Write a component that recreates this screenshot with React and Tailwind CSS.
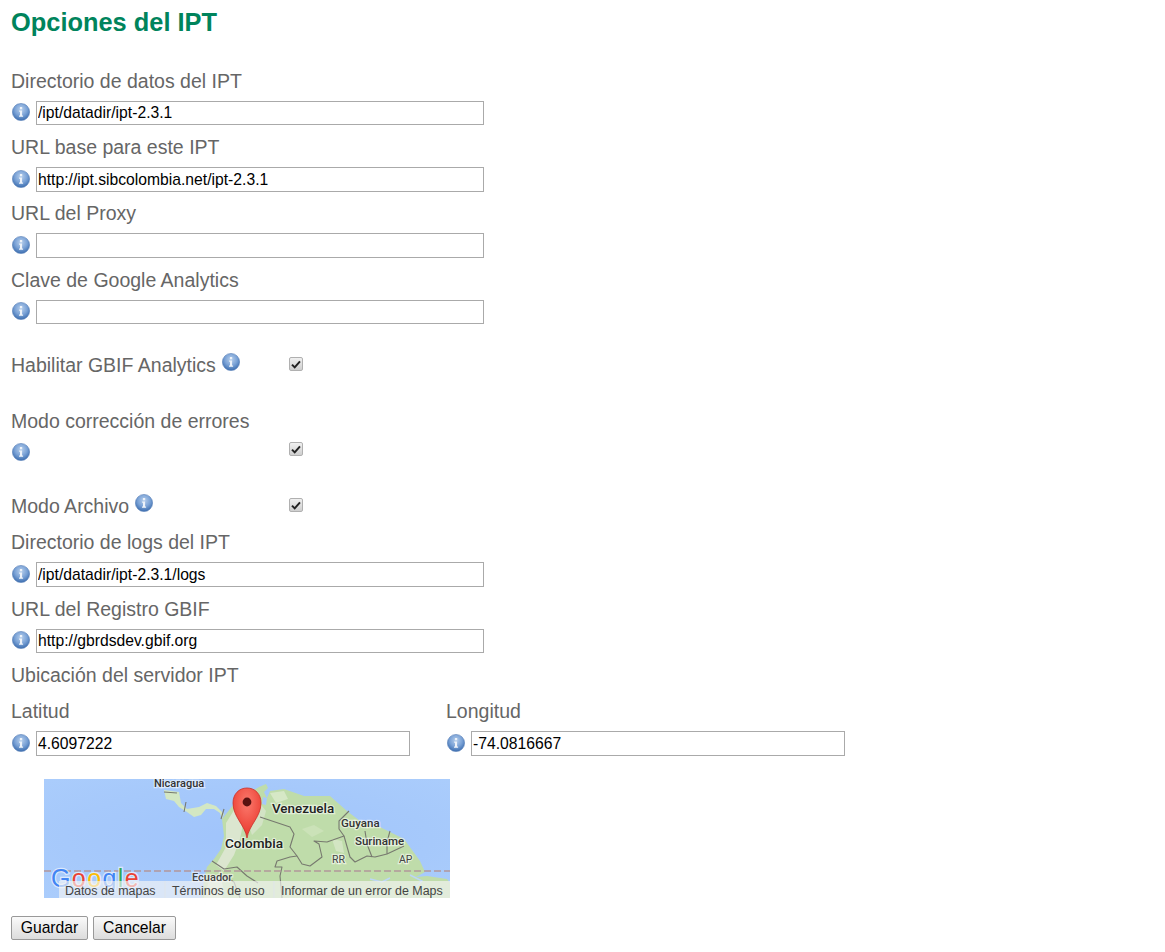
import React from "react";

function Info({ id = "a" }) {
  return (
    <svg width="18" height="18" viewBox="0 0 18 18" className="block shrink-0">
      <defs>
        <radialGradient id={"g" + id} cx="50%" cy="35%" r="65%">
          <stop offset="0%" stopColor="#b7cfec" />
          <stop offset="55%" stopColor="#7aa2d6" />
          <stop offset="100%" stopColor="#3a6cae" />
        </radialGradient>
      </defs>
      <circle cx="9" cy="9" r="8.6" fill={"url(#g" + id + ")"} stroke="#5a82b9" strokeWidth="0.6" />
      <rect x="7.9" y="4" width="2.3" height="2.2" fill="#eef3f9" />
      <path d="M7.1 7.5h3v5h1v1.3H7v-1.3h1v-3.7h-.9z" fill="#eef3f9" />
    </svg>
  );
}

function Check() {
  return (
    <div className="w-[14px] h-[14px] rounded-[2px] border border-[#b0b0b0] bg-gradient-to-b from-[#f0f0f0] to-[#cfcfcf] flex items-center justify-center shrink-0">
      <svg width="10" height="9" viewBox="0 0 10 9">
        <path d="M1 4.6 L3.7 7.4 L9 1.4" fill="none" stroke="#222" strokeWidth="2" />
      </svg>
    </div>
  );
}

function Label({ children }) {
  return <div className="text-[19.5px] leading-[24px] h-[24px] text-[#666666] whitespace-nowrap">{children}</div>;
}

function TextInput({ value, width = "w-[448px]", tall = false, id }) {
  return (
    <div className="flex items-start gap-[6px] h-[24px]">
      <div className={tall ? "ml-[1px] mt-[3px]" : "ml-[1px] mt-[2px]"}><Info id={id} /></div>
      <input
        readOnly
        value={value}
        className={"border border-[#aaaaaa] bg-white text-black text-[15.7px] px-[1px] outline-none " + (tall ? "h-[25px] " : "h-[24px] ") + width}
        style={{ fontFamily: "'Liberation Sans', Arial, sans-serif" }}
      />
    </div>
  );
}

function Field({ label, value, id, tall, rowClass = "h-[66px]" }) {
  return (
    <div className={rowClass}>
      <Label>{label}</Label>
      <div className="pt-[8px]">
        <TextInput value={value} id={id} tall={tall} />
      </div>
    </div>
  );
}

const halo = { paintOrder: "stroke", stroke: "#ffffff", strokeOpacity: 0.55, strokeWidth: 2.4 };

function MapPic() {
  const border = "#77796f";
  return (
    <svg width="406" height="119" viewBox="0 0 406 119" className="block" style={{ fontFamily: "Roboto, 'Liberation Sans', sans-serif" }}>
      <defs>
        <radialGradient id="sea" cx="50%" cy="50%" r="75%">
          <stop offset="0" stopColor="#a0c4fb" />
          <stop offset="0.6" stopColor="#a6c9fb" />
          <stop offset="1" stopColor="#abcdfc" />
        </radialGradient>
        <radialGradient id="pin" cx="50%" cy="30%" r="70%">
          <stop offset="0" stopColor="#fb7a6d" />
          <stop offset="1" stopColor="#e9352a" />
        </radialGradient>
      </defs>
      <rect width="406" height="119" fill="url(#sea)" />

      <path d="M120 11 L135 13 L137 24 L143 30 L155 28 L163 24 L172 27 L180 35 L178 40 L176 34 L170 30 L162 30 L157 36 L150 38 L143 33 L135 28 L130 22 L122 20 Z" fill="#d3e7c3" />
      <path d="M178 40 L190 25 L205 14 L215 8 L222 5 L224 9 L220 13 L223 19 L226 12 L240 10 L260 17 L286 17 L303 32 L316 42 L336 48 L360 60 L376 82 L381 93 L372 98 L383 97 L403 100 L406 104 L406 119 L158 119 L160 100 L163 88 L170 80 L177 70 L180 57 Z" fill="#bfdcaa" />
      <path d="M182 44 L192 28 L206 20 L200 40 L196 60 L190 76 L180 92 L172 86 L182 68 Z" fill="#dbe6cf" />
      <path d="M226 14 L240 12 L244 20 L232 24 Z" fill="#d6e8c6" />
      <path d="M206 30 L214 22 L222 32 L218 46 L208 56 L204 44 Z" fill="#d3e3c5" />
      <path d="M258 50 L270 46 L280 52 L268 58 Z" fill="#cbe2b8" />
      <path d="M288 60 L298 62 L300 74 L292 72 Z" fill="#d3e5c3" />
      <path d="M160 119 L166 98 L176 96 L180 112 L178 119 Z" fill="#d6e4cb" />
      <path d="M219 18 L223 19 L222 26 L218 25 Z" fill="#a6c9fb" />
      <path d="M326 100 L338 103 L346 99 M366 96 L378 102 L372 108" fill="none" stroke="#bcd6f5" strokeWidth="1.4" />

      <g fill="none" stroke={border} strokeWidth="1.1" strokeLinejoin="round">
        <path d="M216 38 L246 48 L250 55 L246 68 L253 77 L246 78 L233 82 L231 88 L238 88 L236 97 L238 119" />
        <path d="M253 77 L258 85 L266 87 L278 78 L275 65 L270 62 L283 63 L300 57 L295 50 L295 42 L305 32" />
        <path d="M300 57 L306 78 L311 83 L323 77 L331 78 L343 75 L360 67" />
        <path d="M321 52 L323 65 L328 78" />
        <path d="M346 52 L343 63 L343 75" />
        <path d="M168 82 L180 90 L193 88 L203 97 L214 104" />
        <path d="M180 97 L190 103 L196 119" />
        <path d="M120 13 L133 14" />
        <path d="M142 23 L140 33" />
        <path d="M180 30 L177 40" />
      </g>
      <line x1="0" y1="92" x2="406" y2="92" stroke="#b2979a" strokeWidth="1.4" strokeDasharray="7 3" />

      <text x="110" y="8" fontSize="11" fontWeight="500" fill="#333" style={halo}>Nicaragua</text>
      <text x="228" y="34" fontSize="13.4" fontWeight="500" fill="#222" style={halo}>Venezuela</text>
      <text x="297" y="48" fontSize="11.5" fontWeight="500" fill="#333" style={halo}>Guyana</text>
      <text x="311" y="66" fontSize="11.5" fontWeight="500" fill="#333" style={halo}>Suriname</text>
      <text x="288" y="84" fontSize="10.5" fill="#444" style={halo}>RR</text>
      <text x="355" y="84" fontSize="10.5" fill="#444" style={halo}>AP</text>
      <text x="181" y="69" fontSize="13.6" fontWeight="500" fill="#222" style={halo}>Colombia</text>
      <text x="148" y="102" fontSize="11" fontWeight="500" fill="#444" style={halo}>Ecuador</text>

      <path d="M203 59 C201 46 189 38 189 24 C189 15 195 9 203 9 C211 9 217 15 217 24 C217 38 205 46 203 59 Z" fill="url(#pin)" stroke="#c9302a" strokeWidth="0.8" />
      <circle cx="203" cy="23" r="4.4" fill="#5a1210" />

      <text x="7" y="108" fontSize="25" letterSpacing="1.4" fontFamily="'Liberation Sans', sans-serif" style={{ paintOrder: "stroke", stroke: "#ffffff", strokeOpacity: 0.6, strokeWidth: 2.5 }}>
        <tspan fill="#4285f4">G</tspan>
        <tspan fill="#ea4335">o</tspan>
        <tspan fill="#fbbc05">o</tspan>
        <tspan fill="#4285f4">g</tspan>
        <tspan fill="#34a853">l</tspan>
        <tspan fill="#ea4335">e</tspan>
      </text>

      <rect x="15" y="102" width="391" height="17" fill="#f5f5f5" fillOpacity="0.66" />
      <line x1="121" y1="102" x2="121" y2="119" stroke="#dfe5ea" />
      <line x1="230" y1="102" x2="230" y2="119" stroke="#dfe5ea" />
      <g fontSize="12.45" fill="#444" fontFamily="'Liberation Sans', sans-serif">
        <text x="21" y="116">Datos de mapas</text>
        <text x="128" y="116">Términos de uso</text>
        <text x="237" y="116">Informar de un error de Maps</text>
      </g>
    </svg>
  );
}

function Btn({ children, className = "" }) {
  return (
    <button className={"h-[24px] border border-[#999999] rounded-[2px] bg-gradient-to-b from-[#fafafa] to-[#dcdcdc] text-[15.7px] leading-[20px] text-black flex items-center justify-center " + className}>
      {children}
    </button>
  );
}

export default function App() {
  return (
    <div className="w-[1165px] h-[952px] bg-white px-[11px] overflow-hidden" style={{ fontFamily: "'Liberation Sans', Arial, sans-serif" }}>
      <h1 className="text-[25.4px] leading-[28px] font-bold text-[#00845c] pt-[8px] h-[69px]">Opciones del IPT</h1>

      <Field label="Directorio de datos del IPT" value="/ipt/datadir/ipt-2.3.1" id="a" />
      <Field label="URL base para este IPT" value="http://ipt.sibcolombia.net/ipt-2.3.1" id="b" tall />
      <Field label="URL del Proxy" value="" id="c" tall rowClass="h-[67px]" />
      <Field label="Clave de Google Analytics" value="" id="d" />

      <div className="flex items-start h-[75px] pt-[19px]">
        <div className="w-[278px] flex items-start gap-[6px]">
          <Label>Habilitar GBIF Analytics</Label>
          <div><Info id="e" /></div>
        </div>
        <div className="pt-[4px]"><Check /></div>
      </div>

      <div className="h-[85px]">
        <Label>Modo corrección de errores</Label>
        <div className="flex items-center h-[24px] mt-[6px]">
          <div className="w-[278px] pl-[1px] pt-[1px]"><Info id="f" /></div>
          <div className="-mt-[4px]"><Check /></div>
        </div>
      </div>

      <div className="flex items-start h-[36px]">
        <div className="w-[278px] flex items-start gap-[6px]">
          <Label>Modo Archivo</Label>
          <div><Info id="g" /></div>
        </div>
        <div className="pt-[4px]"><Check /></div>
      </div>

      <Field label="Directorio de logs del IPT" value="/ipt/datadir/ipt-2.3.1/logs" id="h" tall rowClass="h-[67px]" />
      <Field label="URL del Registro GBIF" value="http://gbrdsdev.gbif.org" id="i" />

      <Label>Ubicación del servidor IPT</Label>
      <div className="flex pt-[12px]">
        <div className="w-[435px]">
          <Label>Latitud</Label>
          <div className="pt-[8px]"><TextInput value="4.6097222" width="w-[374px]" tall id="j" /></div>
        </div>
        <div>
          <Label>Longitud</Label>
          <div className="pt-[8px]"><TextInput value="-74.0816667" width="w-[374px]" tall id="k" /></div>
        </div>
      </div>

      <div className="pl-[33px] pt-[24px]"><MapPic /></div>

      <div className="flex gap-[5px] pt-[18px]">
        <Btn className="w-[77px]">Guardar</Btn>
        <Btn className="w-[83px]">Cancelar</Btn>
      </div>
    </div>
  );
}
